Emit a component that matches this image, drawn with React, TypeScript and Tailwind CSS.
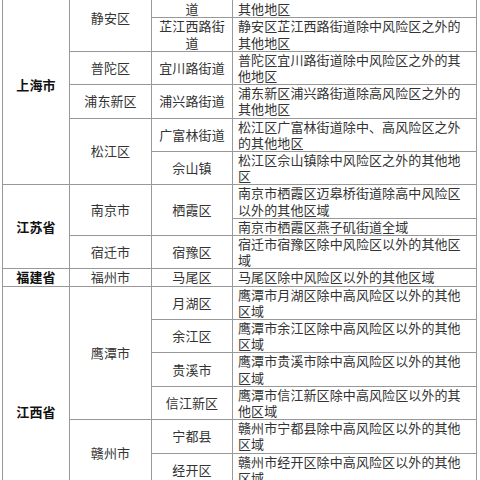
interface ScopeRow {
  province?: { name: string; span: number };
  city?: { name: string; span: number };
  district?: { name: string; span: number };
  scope: string;
}

const rows: ScopeRow[] = [
  {
    province: { name: "上海市", span: 6 },
    city: { name: "静安区", span: 2 },
    district: { name: "南京西路街道", span: 1 },
    scope: "静安区南京西路街道除中风险区之外的其他地区",
  },
  {
    district: { name: "芷江西路街道", span: 1 },
    scope: "静安区芷江西路街道除中风险区之外的其他地区",
  },
  {
    city: { name: "普陀区", span: 1 },
    district: { name: "宜川路街道", span: 1 },
    scope: "普陀区宜川路街道除中风险区之外的其他地区",
  },
  {
    city: { name: "浦东新区", span: 1 },
    district: { name: "浦兴路街道", span: 1 },
    scope: "浦东新区浦兴路街道除高风险区之外的其他地区",
  },
  {
    city: { name: "松江区", span: 2 },
    district: { name: "广富林街道", span: 1 },
    scope: "松江区广富林街道除中、高风险区之外的其他地区",
  },
  {
    district: { name: "佘山镇", span: 1 },
    scope: "松江区佘山镇除中风险区之外的其他地区",
  },
  {
    province: { name: "江苏省", span: 3 },
    city: { name: "南京市", span: 2 },
    district: { name: "栖霞区", span: 2 },
    scope: "南京市栖霞区迈皋桥街道除高中风险区以外的其他区域",
  },
  { scope: "南京市栖霞区燕子矶街道全域" },
  {
    city: { name: "宿迁市", span: 1 },
    district: { name: "宿豫区", span: 1 },
    scope: "宿迁市宿豫区除中风险区以外的其他区域",
  },
  {
    province: { name: "福建省", span: 1 },
    city: { name: "福州市", span: 1 },
    district: { name: "马尾区", span: 1 },
    scope: "马尾区除中风险区以外的其他区域",
  },
  {
    province: { name: "江西省", span: 8 },
    city: { name: "鹰潭市", span: 4 },
    district: { name: "月湖区", span: 1 },
    scope: "鹰潭市月湖区除中高风险区以外的其他区域",
  },
  {
    district: { name: "余江区", span: 1 },
    scope: "鹰潭市余江区除中高风险区以外的其他区域",
  },
  {
    district: { name: "贵溪市", span: 1 },
    scope: "鹰潭市贵溪市除中高风险区以外的其他区域",
  },
  {
    district: { name: "信江新区", span: 1 },
    scope: "鹰潭市信江新区除中高风险区以外的其他区域",
  },
  {
    city: { name: "赣州市", span: 2 },
    district: { name: "宁都县", span: 1 },
    scope: "赣州市宁都县除中高风险区以外的其他区域",
  },
  {
    district: { name: "经开区", span: 1 },
    scope: "赣州市经开区除中高风险区以外的其他区域",
  },
  {
    city: { name: "上饶市", span: 2 },
    district: { name: "信州区", span: 1 },
    scope: "上饶市信州区除中高风险区以外的其他区域",
  },
  {
    district: { name: "广丰区", span: 1 },
    scope: "上饶市广丰区全域",
  },
];

const cell = "border border-[#999] align-middle";

export default function App() {
  return (
    <div className="min-h-screen overflow-hidden bg-white">
      <table
        className="-mt-[16px] ml-[2px] w-[474px] table-fixed border-collapse text-[13px] leading-[16.2px] tracking-[0.1px] text-[#333]"
        style={{ fontFamily: '"Noto Sans CJK SC", sans-serif' }}
      >
        <colgroup>
          <col className="w-[67px]" />
          <col className="w-[82px]" />
          <col className="w-[81px]" />
          <col className="w-[244px]" />
        </colgroup>
        <tbody>
          {rows.map((row, index) => (
            <tr key={index}>
              {row.province && (
                <td
                  rowSpan={row.province.span}
                  className={`${cell} px-1 text-center font-bold text-[#111]`}
                >
                  {row.province.name}
                </td>
              )}
              {row.city && (
                <td rowSpan={row.city.span} className={`${cell} px-1 text-center`}>
                  {row.city.name}
                </td>
              )}
              {row.district && (
                <td rowSpan={row.district.span} className={`${cell} px-[4px] text-center`}>
                  {row.district.name}
                </td>
              )}
              <td className={`${cell} pr-[8px] pl-[5px] text-left`}>{row.scope}</td>
            </tr>
          ))}
        </tbody>
      </table>
    </div>
  );
}
